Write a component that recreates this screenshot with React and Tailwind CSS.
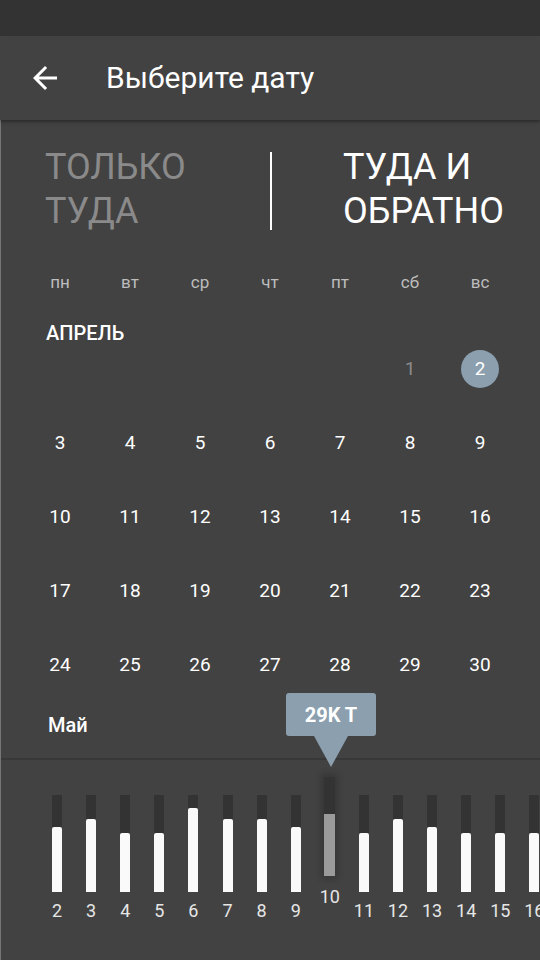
import React from "react";

const weekdays = ["пн", "вт", "ср", "чт", "пт", "сб", "вс"];
const weeks = [
  [3, 4, 5, 6, 7, 8, 9],
  [10, 11, 12, 13, 14, 15, 16],
  [17, 18, 19, 20, 21, 22, 23],
  [24, 25, 26, 27, 28, 29, 30],
];
const bars = [
  { d: 2, h: 65 },
  { d: 3, h: 73 },
  { d: 4, h: 59 },
  { d: 5, h: 59 },
  { d: 6, h: 84 },
  { d: 7, h: 73 },
  { d: 8, h: 73 },
  { d: 9, h: 65 },
  { d: 10, h: 62, sel: true },
  { d: 11, h: 59 },
  { d: 12, h: 73 },
  { d: 13, h: 65 },
  { d: 14, h: 59 },
  { d: 15, h: 59 },
  { d: 16, h: 59 },
];

export default function App() {
  return (
    <div
      className="w-[540px] h-[960px] overflow-hidden bg-[#424242] flex flex-col text-white"
      style={{ fontFamily: "Roboto, 'Noto Sans', sans-serif" }}
    >
      <div className="h-[36px] bg-[#333333] shrink-0" />
      <div className="h-[84px] bg-[#424242] shrink-0 flex items-center pl-[27px] relative z-10 shadow-[0_2px_3px_rgba(0,0,0,0.35)]">
        <svg width="36" height="36" viewBox="0 0 24 24" fill="#ffffff">
          <path d="M20 11H7.83l5.59-5.59L12 4l-8 8 8 8 1.41-1.41L7.83 13H20v-2z" />
        </svg>
        <div className="ml-[43px] text-[30px] leading-[34px] text-white">Выберите дату</div>
      </div>
      <div className="flex-1 flex flex-col border-l border-[#767676] relative">
        <div className="flex pt-[25px] shrink-0">
          <div className="w-[269px] pl-[44px] text-[36px] leading-[44px] text-[#8a8a8a]">
            ТОЛЬКО
            <br />
            ТУДА
          </div>
          <div className="w-[2px] h-[78px] bg-white mt-[7px]" />
          <div className="pl-[71px] text-[36px] leading-[44px] text-white">
            ТУДА И
            <br />
            ОБРАТНО
          </div>
        </div>
        <div className="grid grid-cols-7 w-[490px] ml-[24px] mt-[30px] h-[40px] items-center">
          {weekdays.map((w) => (
            <div key={w} className="text-center text-[17px] text-[#bdbdbd]">
              {w}
            </div>
          ))}
        </div>
        <div className="ml-[45px] mt-[19px] h-[22px] text-[20px] leading-[22px] font-medium">АПРЕЛЬ</div>
        <div className="flex flex-col gap-[24px] w-[490px] ml-[24px]">
          <div className="grid grid-cols-7 h-[50px] items-center">
            <div />
            <div />
            <div />
            <div />
            <div />
            <div className="text-center text-[19px] text-[#8a8a8a]">1</div>
            <div className="flex justify-center">
              <div className="w-[38px] h-[38px] rounded-full bg-[#8b9fae] flex items-center justify-center text-[19px] text-white">
                2
              </div>
            </div>
          </div>
          {weeks.map((wk, i) => (
            <div key={i} className="grid grid-cols-7 h-[50px] items-center">
              {wk.map((d) => (
                <div key={d} className="text-center text-[19px] text-white">
                  {d}
                </div>
              ))}
            </div>
          ))}
        </div>
        <div className="ml-[47px] mt-[24px] h-[22px] text-[20px] leading-[22px] font-medium">Май</div>
        <div className="mt-[22px] flex-1 relative border-t-2 border-[#383838]">
          <div className="absolute left-[285px] top-[-67px] flex flex-col items-center z-10">
            <div className="w-[90px] h-[43px] rounded-[3px] bg-[#8b9fae] flex items-center justify-center text-[20px] font-bold text-white">
              29K T
            </div>
            <div className="w-0 h-0 border-l-[17px] border-r-[17px] border-t-[31px] border-l-transparent border-r-transparent border-t-[#8b9fae]" />
          </div>
          <div className="flex items-start pl-[39px] overflow-hidden">
            {bars.map((b) =>
              b.sel ? (
                <div key={b.d} className="w-[34.1px] shrink-0 flex flex-col items-center mt-[17px]">
                  <div className="w-[11px] h-[99px] bg-[#333333] flex flex-col justify-end shadow-[0_0_6px_3px_rgba(0,0,0,0.18)]">
                    <div className="w-full bg-[#9a9a9a]" style={{ height: b.h }} />
                  </div>
                  <div className="mt-[10px] text-[18px] leading-[22px] text-[#e6e6e6]">{b.d}</div>
                </div>
              ) : (
                <div key={b.d} className="w-[34.1px] shrink-0 flex flex-col items-center mt-[35px]">
                  <div className="w-[10px] h-[97px] bg-[#333333] flex flex-col justify-end">
                    <div className="w-full bg-[#fafafa] rounded-t-[2px]" style={{ height: b.h }} />
                  </div>
                  <div className="mt-[8px] text-[18px] leading-[22px] text-[#e6e6e6]">{b.d}</div>
                </div>
              )
            )}
          </div>
        </div>
      </div>
    </div>
  );
}
